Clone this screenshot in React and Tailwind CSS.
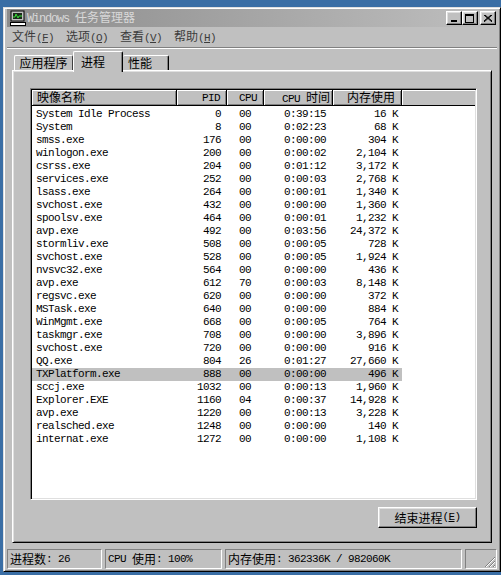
import React from 'react';

const CJK = /([\u3000-\u9fff\uff00-\uffef]+)/;

// mixed text: ascii in mono, chinese in 12px CJK font
const T = ({ children }) =>
  String(children)
    .split(CJK)
    .map((p, i) =>
      CJK.test(p) ? (
        <span key={i} className="font-['Noto_Sans_CJK_SC',sans-serif] text-[12px] tracking-normal">
          {p}
        </span>
      ) : (
        p
      )
    );

const rows = [
  ['System Idle Process', '0', '00', '0:39:15', '16 K'],
  ['System', '8', '00', '0:02:23', '68 K'],
  ['smss.exe', '176', '00', '0:00:00', '304 K'],
  ['winlogon.exe', '200', '00', '0:00:02', '2,104 K'],
  ['csrss.exe', '204', '00', '0:01:12', '3,172 K'],
  ['services.exe', '252', '00', '0:00:03', '2,768 K'],
  ['lsass.exe', '264', '00', '0:00:01', '1,340 K'],
  ['svchost.exe', '432', '00', '0:00:00', '1,360 K'],
  ['spoolsv.exe', '464', '00', '0:00:01', '1,232 K'],
  ['avp.exe', '492', '00', '0:03:56', '24,372 K'],
  ['stormliv.exe', '508', '00', '0:00:05', '728 K'],
  ['svchost.exe', '528', '00', '0:00:05', '1,924 K'],
  ['nvsvc32.exe', '564', '00', '0:00:00', '436 K'],
  ['avp.exe', '612', '70', '0:00:03', '8,148 K'],
  ['regsvc.exe', '620', '00', '0:00:00', '372 K'],
  ['MSTask.exe', '640', '00', '0:00:00', '884 K'],
  ['WinMgmt.exe', '668', '00', '0:00:05', '764 K'],
  ['taskmgr.exe', '708', '00', '0:00:00', '3,896 K'],
  ['svchost.exe', '720', '00', '0:00:00', '916 K'],
  ['QQ.exe', '804', '26', '0:01:27', '27,660 K'],
  ['TXPlatform.exe', '888', '00', '0:00:00', '496 K'],
  ['sccj.exe', '1032', '00', '0:00:13', '1,960 K'],
  ['Explorer.EXE', '1160', '04', '0:00:37', '14,928 K'],
  ['avp.exe', '1220', '00', '0:00:13', '3,228 K'],
  ['realsched.exe', '1248', '00', '0:00:00', '140 K'],
  ['internat.exe', '1272', '00', '0:00:00', '1,108 K'],
];

const raised =
  'bg-[#c0c0c0] border border-t-white border-l-white border-r-black border-b-black shadow-[inset_-1px_-1px_#808080,inset_1px_1px_#dfdfdf]';
const sunkenThin = 'border border-t-[#808080] border-l-[#808080] border-r-white border-b-white';

const TitleBtn = ({ children, className = '' }) => (
  <div className={`w-[16px] h-[14px] flex items-center justify-center ${raised} ${className}`}>
    {children}
  </div>
);

const Menu = ({ label, k }) => (
  <div className="w-[54px] text-[#3c3c3c]">
    <T>{label}</T>(<span className="underline">{k}</span>)
  </div>
);

const HeaderCell = ({ w, children, align = 'right', pr = 'pr-[6px]' }) => (
  <div
    className={`${w} h-full flex items-center bg-[#c0c0c0] border-r border-b border-black shadow-[inset_1px_1px_white,inset_-1px_-1px_#808080] ${
      align === 'left' ? 'justify-start pl-[5px]' : `justify-end ${pr}`
    }`}
  >
    <span className="whitespace-pre leading-[14px]"><T>{children}</T></span>
  </div>
);

const ComputerIcon = () => (
  <svg width="16" height="16" viewBox="0 0 16 16">
    <rect x="1" y="1" width="13" height="10" fill="#c0c0c0" stroke="#000" />
    <rect x="3" y="3" width="9" height="6" fill="#1a2a1a" />
    <polyline points="3,7 5,7 6,4 8,8 9,6 12,6" fill="none" stroke="#38e038" strokeWidth="1" />
    <rect x="0.5" y="12.5" width="15" height="3" fill="#fff" stroke="#000" />
  </svg>
);

export default function App() {
  return (
    <div className="w-[501px] h-[575px] overflow-hidden bg-[#3a6ea5] pt-[7px] pl-[3px] font-['Liberation_Mono','Noto_Sans_CJK_SC',monospace] text-[11px] tracking-[-0.6px] text-black">
      <div className="w-[498px] h-[565px] flex flex-col bg-[#c0c0c0] border border-t-[#dfdfdf] border-l-[#dfdfdf] border-r-black border-b-black shadow-[inset_1px_1px_white,inset_-1px_-1px_#808080] px-[3px] pt-[1px]">
        {/* title bar */}
        <div className="h-[18px] flex items-center bg-linear-to-r from-[#8c8c8c] to-[#bfbfbf] pl-[3px] pr-[1px]">
          <ComputerIcon />
          <span className="ml-[1px] text-[#d8d8d8] text-[12px] tracking-[-1.2px]">
            Windows <T>任务管理器</T>
          </span>
          <div className="ml-auto flex items-center">
            <TitleBtn>
              <div className="w-[6px] h-[2px] bg-black mt-[6px] -ml-[1px]" />
            </TitleBtn>
            <TitleBtn>
              <div className="w-[9px] h-[9px] border border-black border-t-2 -ml-[1px]" />
            </TitleBtn>
            <TitleBtn className="ml-[2px]">
              <svg width="8" height="7" viewBox="0 0 8 7" className="-ml-[1px]">
                <path d="M0 0 L8 7 M1 0 L8 6 M8 0 L0 7 M7 0 L0 6" stroke="#000" strokeWidth="1" />
              </svg>
            </TitleBtn>
          </div>
        </div>

        {/* menu */}
        <div className="h-[20px] flex items-center pl-[5px]">
          <Menu label="文件" k="F" />
          <Menu label="选项" k="O" />
          <Menu label="查看" k="V" />
          <Menu label="帮助" k="H" />
        </div>
        <div className="h-[2px] border-t border-t-[#808080] border-b border-b-white" />

        {/* tabs */}
        <div className="h-[21px] flex items-end px-[7px]">
          <div className="w-[59px] h-[15px] flex items-center justify-center border-t border-l border-white border-r border-r-[#404040] rounded-t-[2px]">
            <T>应用程序</T>
          </div>
          <div className="relative z-10 w-[50px] h-[21px] -mb-[2px] bg-[#c0c0c0] flex justify-center pt-[1px] pr-[10px] border-t border-l border-white border-r border-r-black shadow-[inset_-1px_0_#808080] rounded-t-[2px]">
            <T>进程</T>
          </div>
          <div className="w-[46px] h-[15px] flex items-center pl-[5px] border-t border-white border-r border-r-black shadow-[inset_-1px_0_#808080] rounded-t-[2px]">
            <T>性能</T>
          </div>
        </div>

        {/* panel */}
        <div className="mx-[5px] h-[473px] flex flex-col border border-t-white border-l-white border-r-black border-b-black shadow-[inset_1px_1px_#dfdfdf,inset_-1px_-1px_#808080] pl-[17px] pt-[17px] pr-[14px]">
          <div className="h-[412px] bg-white border border-t-[#808080] border-l-[#808080] border-r-white border-b-white shadow-[inset_1px_1px_black,inset_-1px_-1px_#dfdfdf] p-[1px] overflow-hidden">
            <div className="h-[16px] flex">
              <HeaderCell w="w-[145px]" align="left">映像名称</HeaderCell>
              <HeaderCell w="w-[50px]" pr="pr-[6px]">PID</HeaderCell>
              <HeaderCell w="w-[37px]" pr="pr-[6px]">CPU</HeaderCell>
              <HeaderCell w="w-[69px]" pr="pr-[2px]">CPU 时间</HeaderCell>
              <HeaderCell w="w-[69px]" pr="pr-[6px]">内存使用</HeaderCell>
              <div className="flex-1 h-full bg-[#c0c0c0] border-b border-black shadow-[inset_1px_1px_white]" />
            </div>
            <div className="flex flex-col pt-[2px]">
              {rows.map((r, i) => (
                <div
                  key={i}
                  className={`h-[13px] leading-[13px] flex w-[370px] whitespace-pre ${
                    r[0] === 'TXPlatform.exe' ? 'bg-[#c0c0c0]' : ''
                  }`}
                >
                  <div className="w-[145px] pl-[4px]">{r[0]}</div>
                  <div className="w-[50px] text-right pr-[6px]">{r[1]}</div>
                  <div className="w-[37px] text-right pr-[13px]">{r[2]}</div>
                  <div className="w-[69px] text-right pr-[7px]">{r[3]}</div>
                  <div className="w-[69px] text-right pr-[4px]">{r[4]}</div>
                </div>
              ))}
            </div>
          </div>
          <div className="mt-[7px] flex justify-end">
            <button className={`w-[99px] h-[21px] flex items-center justify-center ${raised}`}>
              <T>结束进程</T>(<span className="underline">E</span>)
            </button>
          </div>
        </div>

        {/* status bar */}
        <div className="mt-[6px] h-[20px] flex gap-[3px] whitespace-pre">
          <div className={`w-[95px] flex items-center pl-[2px] ${sunkenThin}`}>
            <T>进程数</T>: 26
          </div>
          <div className={`w-[117px] flex items-center pl-[2px] ${sunkenThin}`}>
            CPU <T>使用</T>: 100%
          </div>
          <div className={`w-[237px] flex items-center pl-[2px] ${sunkenThin}`}>
            <T>内存使用</T>: 362336K / 982060K
          </div>
          <div className={`w-[32px] flex items-end justify-end ${sunkenThin}`}>
            <svg width="12" height="12" viewBox="0 0 12 12">
              <path d="M11 1 L1 11 M11 5 L5 11 M11 9 L9 11" stroke="#808080" strokeWidth="1" />
              <path d="M11 2 L2 11 M11 6 L6 11 M11 10 L10 11" stroke="#ffffff" strokeWidth="1" />
            </svg>
          </div>
        </div>
      </div>
    </div>
  );
}
